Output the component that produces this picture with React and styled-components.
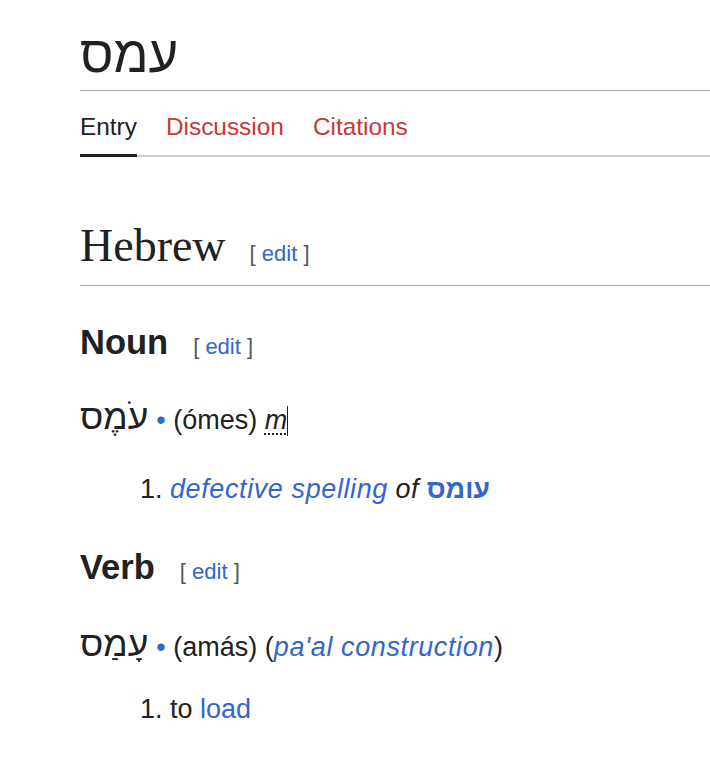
import React from "react";
import styled, { createGlobalStyle } from "styled-components";

const Global = createGlobalStyle`
  html, body {
    margin: 0;
    padding: 0;
    background: #fff;
  }
  body {
    color: #202122;
    font-family: "Liberation Sans", Arial, "DejaVu Sans", sans-serif;
  }
`;

const Page = styled.div`
  padding-left: 80px;
`;

const Title = styled.h1`
  margin: 25px 0 0;
  padding-bottom: 5px;
  font-size: 51px;
  font-weight: normal;
  line-height: 60px;
  border-bottom: 1px solid #a2a9b1;
`;

const Tabs = styled.nav`
  display: flex;
  gap: 29px;
  border-bottom: 2px solid #c8ccd1;
`;

const Tab = styled.a`
  padding: 21px 0 12px;
  font-size: 24.4px;
  line-height: 30px;
  color: ${(p) => (p.$active ? "#202122" : "#c63a2f")};
  border-bottom: 3px solid ${(p) => (p.$active ? "#202122" : "transparent")};
  margin-bottom: -2px;
  text-decoration: none;
`;

const LangHeading = styled.h2`
  margin: 60px 0 0;
  padding-bottom: 3px;
  font-family: "Liberation Serif", "Times New Roman", serif;
  font-size: 46px;
  font-weight: normal;
  line-height: 57px;
  border-bottom: 1px solid #a2a9b1;
`;

const PosHeading = styled.h3`
  margin: ${(p) => p.$top}px 0 0;
  font-size: 34.5px;
  font-weight: bold;
  line-height: 42px;
`;

const Edit = styled.span`
  margin-left: ${(p) => p.$gap || 24}px;
  font-family: "Liberation Sans", Arial, sans-serif;
  font-size: 22px;
  font-weight: normal;
  color: #54595d;
`;

const Link = styled.a`
  color: #3366cc;
  text-decoration: none;
  font-style: ${(p) => (p.$italic ? "italic" : "normal")};
  font-weight: ${(p) => (p.$bold ? "bold" : "normal")};
  letter-spacing: ${(p) => (p.$italic ? "0.6px" : "normal")};
`;

const HeadLine = styled.p`
  margin: ${(p) => p.$top}px 0 0;
  font-size: 27px;
  line-height: 40px;
`;

const Headword = styled.strong`
  font-size: 35.5px;
  font-weight: normal;
  line-height: 1;
`;

const Bullet = styled.span`
  color: #3366cc;
  margin-left: 8px;
`;

const Gender = styled.abbr`
  font-style: italic;
  text-decoration: underline dotted 2px;
  text-underline-offset: 4px;
`;

const Caret = styled.span`
  display: inline-block;
  width: 1px;
  height: 30px;
  background: #202122;
  vertical-align: -7px;
`;

const Senses = styled.ol`
  margin: ${(p) => p.$top}px 0 0;
  padding-left: 90px;
  font-size: 27px;
  line-height: 40px;
`;

const Em = styled.i`
  letter-spacing: 0.6px;
`;

export default function App() {
  return (
    <Page>
      <Global />
      <Title>עמס</Title>
      <Tabs>
        <Tab $active>Entry</Tab>
        <Tab>Discussion</Tab>
        <Tab>Citations</Tab>
      </Tabs>

      <LangHeading>
        Hebrew
        <Edit>
          [ <Link>edit</Link> ]
        </Edit>
      </LangHeading>

      <PosHeading $top={35}>
        Noun
        <Edit $gap={25}>
          [ <Link>edit</Link> ]
        </Edit>
      </PosHeading>
      <HeadLine $top={32}>
        <Headword lang="he" dir="rtl">עֹמֶס</Headword>
        <Bullet>•</Bullet> (ómes) <Gender title="masculine">m</Gender>
        <Caret />
      </HeadLine>
      <Senses $top={29}>
        <li>
          <Link $italic>defective spelling</Link> <Em>of</Em>{" "}
          <Link $bold lang="he">עומס</Link>
        </li>
      </Senses>

      <PosHeading $top={37}>
        Verb
        <Edit $gap={25}>
          [ <Link>edit</Link> ]
        </Edit>
      </PosHeading>
      <HeadLine $top={34}>
        <Headword lang="he" dir="rtl">עָמַס</Headword>
        <Bullet>•</Bullet> (amás) (<Link $italic>pa'al construction</Link>)
      </HeadLine>
      <Senses $top={22}>
        <li>
          to <Link>load</Link>
        </li>
      </Senses>
    </Page>
  );
}
